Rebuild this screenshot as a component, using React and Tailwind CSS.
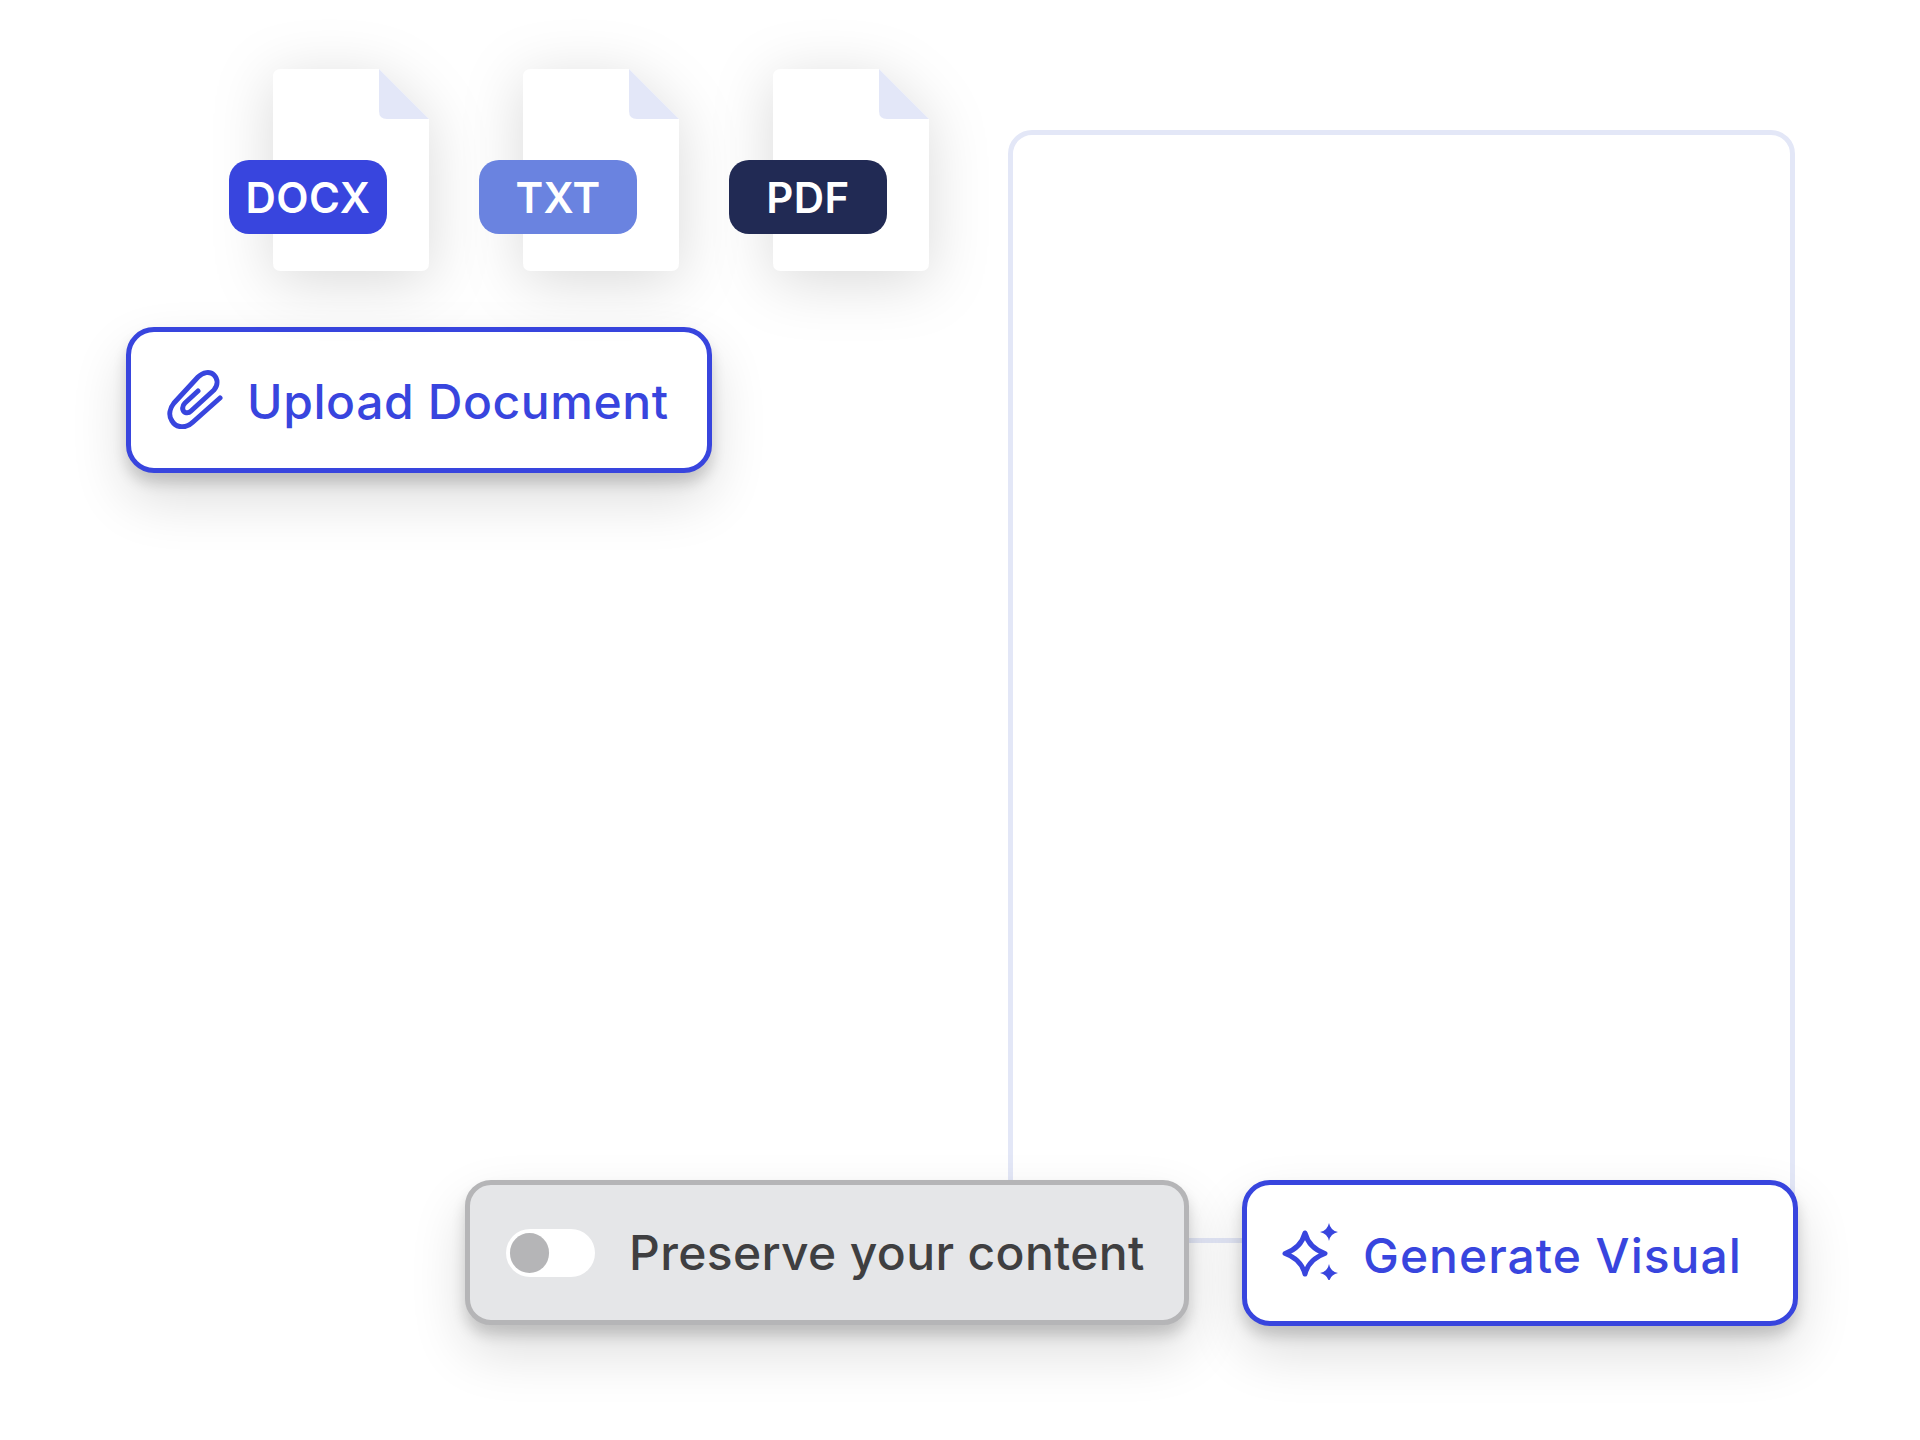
import React from 'react';

const files = [
  { label: 'DOCX', badge: 'bg-[#3845de]' },
  { label: 'TXT', badge: 'bg-[#6a83e0]' },
  { label: 'PDF', badge: 'bg-[#212a54]' },
];

function FileIcon({ label, badge }) {
  return (
    <div className="relative h-[202px] w-[156px]">
      <svg width="156" height="202" viewBox="0 0 156 202" className="overflow-visible drop-shadow-[0_10px_30px_rgba(0,0,0,0.15)]">
        <path d="M8 0H106L156 50V194Q156 202 148 202H8Q0 202 0 194V8Q0 0 8 0Z" fill="#ffffff" />
        <path d="M106 0L156 50H114Q106 50 106 42Z" fill="#e3e7f8" />
      </svg>
      <div className="absolute left-[-44px] top-[91px]">
        <div className={`flex h-[74px] w-[158px] items-center justify-center rounded-[20px] font-['Inter',sans-serif] text-[42px] font-semibold tracking-[0.4px] text-white ${badge}`}>
          {label}
        </div>
      </div>
    </div>
  );
}

function ClipIcon() {
  return (
    <svg width="70" height="70" viewBox="0 0 70 70" fill="none" stroke="#3845de" strokeWidth="5" strokeLinecap="round" strokeLinejoin="round" className="-mt-[12px] shrink-0">
      <path d="M60 39L33 63C26 70 16 69 12 62C8 56 10 49 14 44L38 18C43 13 50 12 54 16C58 20 58 26 54 31L31 52C28 55 24 54 23 51C22 48 23 46 25 44L38 32" />
    </svg>
  );
}

function SparkIcon() {
  return (
    <svg width="70" height="70" viewBox="0 0 70 70" className="-mt-[16px] shrink-0">
      <path d="M35 23Q39 38 55 43.5Q39 49 35 64Q31 49 15 43.5Q31 38 35 23Z" fill="none" stroke="#3845de" strokeWidth="5" strokeLinejoin="round" />
      <path d="M59 13Q60.5 20.5 68 22Q60.5 23.5 59 31Q57.5 23.5 50 22Q57.5 20.5 59 13Z" fill="#3845de" />
      <path d="M59 54Q60.5 61.5 68 63Q60.5 64.5 59 72Q57.5 64.5 50 63Q57.5 61.5 59 54Z" fill="#3845de" />
    </svg>
  );
}

export default function App() {
  return (
    <div className="h-[1440px] w-[1920px] overflow-hidden bg-white font-['Inter',sans-serif]">
      {/* top: files + upload, output frame */}
      <div className="flex items-start">
        <div className="w-[1008px] pl-[126px] pt-[69px]">
          <div className="flex gap-[94px] pl-[147px]">
            {files.map((f) => (
              <FileIcon key={f.label} label={f.label} badge={f.badge} />
            ))}
          </div>
          <div className="mt-[56px] flex h-[146px] w-[586px] items-center rounded-[28px] border-[5px] border-[#3845de] bg-white pl-[29px] shadow-[0_10px_14px_rgba(0,0,0,0.16),0_26px_56px_rgba(0,0,0,0.14)]">
            <ClipIcon />
            <span className="ml-[17px] mt-[4px] text-[48px] font-medium tracking-[0.6px] text-[#3845de]">Upload Document</span>
          </div>
        </div>
        <div className="mt-[130px] h-[1113px] w-[787px] rounded-[24px] border-[5px] border-[#e3e7f7]" />
      </div>

      {/* bottom: toggle + generate */}
      <div className="relative -mt-[63px] flex gap-[53px] pl-[465px]">
        <div className="flex h-[145px] w-[724px] items-center rounded-[26px] border-[5px] border-[#b5b5b7] bg-[#e5e6e8] pl-[36px] shadow-[0_10px_14px_rgba(0,0,0,0.16),0_26px_56px_rgba(0,0,0,0.14)]">
          <div className="flex h-[48px] w-[89px] items-center rounded-full bg-white pl-[4px]">
            <div className="h-[40px] w-[39px] rounded-full bg-[#b5b5b7]" />
          </div>
          <span className="ml-[34px] text-[48px] font-medium tracking-[0.35px] text-[#3f3f41]">Preserve your content</span>
        </div>
        <div className="flex h-[146px] w-[556px] items-center rounded-[28px] border-[5px] border-[#3845de] bg-white pl-[23px] shadow-[0_10px_14px_rgba(0,0,0,0.16),0_26px_56px_rgba(0,0,0,0.14)]">
          <SparkIcon />
          <span className="ml-[23px] mt-[5px] text-[48px] font-medium tracking-[1px] text-[#3845de]">Generate Visual</span>
        </div>
      </div>
    </div>
  );
}
